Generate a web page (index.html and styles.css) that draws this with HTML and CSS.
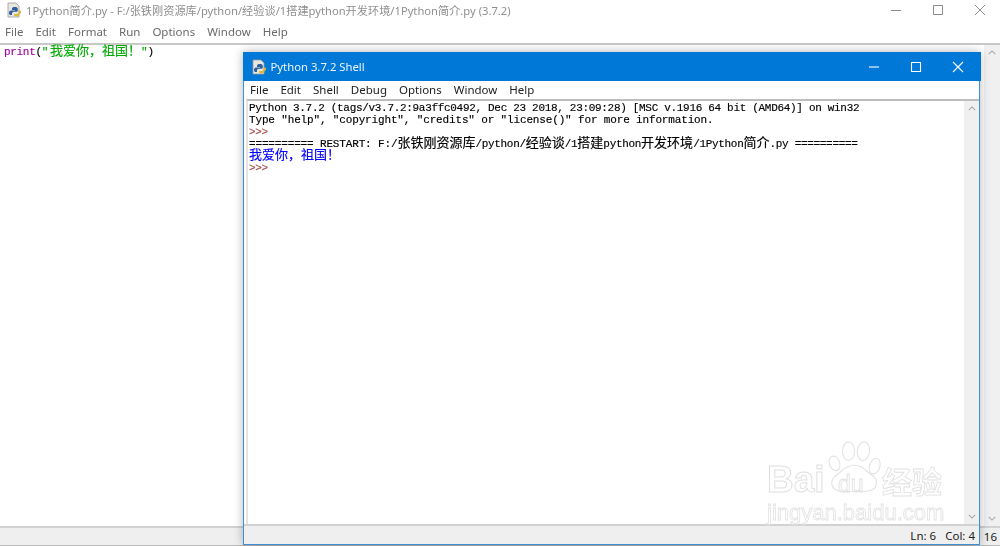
FILE: index.html
```html
<!DOCTYPE html>
<html lang="zh">
<head>
<meta charset="utf-8">
<title>Python IDLE</title>
<link rel="stylesheet" href="styles.css">
</head>
<body>
<svg class="defs" width="0" height="0" aria-hidden="true">
  <symbol id="pyfile" viewBox="0 0 16 16">
    <path d="M2 1h8l3 3v11H2z" fill="#e8e6df" stroke="#9a9a9a" stroke-width=".8"/>
    <path d="M9 5c-2 0-3 .6-3 2v1h3v.6H5c-1.400 0-2 1-2 2.400s.7 2 1.800 2H6v-1.500c0-1 .8-1.700 1.800-1.700h2.400c.9 0 1.600-.7 1.600-1.600V6.800C11.800 5.600 10.600 5 9 5z" fill="#2f5f9e"/>
    <path d="M12.500 8.500v1.400c0 1.300-1 2.100-2.200 2.100H8v.8c0 1 1.200 1.700 2.600 1.700 1.600 0 2.900-.8 2.900-2v-.6c1 0 1.500-1.100 1.500-2.200 0-.9-.6-1.200-1.200-1.200z" fill="#d9b93a"/>
  </symbol>
</svg>

<main class="editor">
  <header class="titlebar">
    <svg class="app-icon"><use href="#pyfile"/></svg>
    <span class="title-text muted">1Python简介.py - F:/张铁刚资源库/python/经验谈/1搭建python开发环境/1Python简介.py (3.7.2)</span>
    <div class="controls muted-controls">
      <svg class="ctl" viewBox="0 0 42 20"><path d="M16 10.500h10" /></svg>
      <svg class="ctl" viewBox="0 0 42 20"><path d="M16.500 5.500h9v9h-9z" /></svg>
      <svg class="ctl" viewBox="0 0 42 20"><path d="M16 5l10 10M26 5L16 15" /></svg>
    </div>
  </header>
  <nav class="menubar editor-menu">
    <span>File</span><span>Edit</span><span>Format</span><span>Run</span><span>Options</span><span>Window</span><span>Help</span>
  </nav>
  <div class="editor-body">
    <div class="code editor-code"><span class="kw">print</span>(<span class="str"><span class="quote">"</span><span class="cjk">我爱你，祖国！</span>"</span>)</div>
    <div class="scrollbar">
      <svg class="chev" viewBox="0 0 10 6"><path d="M1 5l4-4 4 4"/></svg>
      <svg class="chev" viewBox="0 0 10 6"><path d="M1 1l4 4 4-4"/></svg>
    </div>
  </div>
  <footer class="statusbar editor-status"><span class="cut">16</span></footer>
</main>

<section class="shell">
  <header class="shell-title">
    <svg class="app-icon"><use href="#pyfile"/></svg>
    <span class="shell-name">Python 3.7.2 Shell</span>
    <div class="controls white-controls">
      <svg class="ctl-s" viewBox="0 0 42 28"><path d="M16 14h10" /></svg>
      <svg class="ctl-s" viewBox="0 0 42 28"><path d="M16.500 9.500h9v9h-9z" /></svg>
      <svg class="ctl-s" viewBox="0 0 42 28"><path d="M16 9l10 10M26 9L16 19" /></svg>
    </div>
  </header>
  <nav class="menubar shell-menu">
    <span>File</span><span>Edit</span><span>Shell</span><span>Debug</span><span>Options</span><span>Window</span><span>Help</span>
  </nav>
  <div class="shell-body">
    <div class="code shell-code">
      <div class="line">Python 3.7.2 (tags/v3.7.2:9a3ffc0492, Dec 23 2018, 23:09:28) [MSC v.1916 64 bit (AMD64)] on win32</div>
      <div class="line wide">Type "help", "copyright", "credits" or "license()" for more information.</div>
      <div class="line prompt">&gt;&gt;&gt;</div>
      <div class="line"><span class="wide">========== RESTART: F:/</span><span class="cjk">张铁刚资源库</span>/python/<span class="cjk">经验谈</span>/1<span class="cjk">搭建</span>python<span class="cjk">开发环境</span>/1Python<span class="cjk">简介</span>.py ==========</div>
      <div class="line out"><span class="cjk">我爱你，祖国！</span></div>
      <div class="line prompt">&gt;&gt;&gt;</div>
    </div>
    <div class="scrollbar shell-scroll">
      <svg class="chev" viewBox="0 0 10 6"><path d="M1 5l4-4 4 4"/></svg>
      <svg class="chev" viewBox="0 0 10 6"><path d="M1 1l4 4 4-4"/></svg>
    </div>
  </div>
  <footer class="statusbar shell-status"><span>Ln: 6</span><span>Col: 4</span></footer>
</section>

<aside class="watermark">
  <svg class="paw" viewBox="0 0 60 62">
    <ellipse cx="7" cy="26" rx="5.500" ry="8" transform="rotate(-20 7 26)"/>
    <ellipse cx="22" cy="13" rx="6.500" ry="10"/>
    <ellipse cx="38" cy="13" rx="6.500" ry="10" transform="rotate(6 38 13)"/>
    <ellipse cx="50" cy="29" rx="5.500" ry="8.500" transform="rotate(18 50 29)"/>
    <path d="M8 54c-6-4-5-12 2-16 5-3 8-10 18-10s13 7 18 10c7 4 8 12 2 16-5 3-12 2-19 2s-16 2-21-2z"/>
  </svg>
  <span class="wm-bai">Bai</span>
  <span class="wm-du">du</span>
  <span class="wm-cn">经验</span>
  <span class="wm-url">jingyan.baidu.com</span>
</aside>
</body>
</html>
```
FILE: styles.css
```css
* { box-sizing: border-box; }
html, body { height: 100%; }
body {
  margin: 0;
  width: 1000px;
  height: 546px;
  overflow: hidden;
  position: relative;
  background: #fff;
  font-family: "Noto Sans", "Open Sans", "Noto Sans CJK SC", sans-serif;
  color: #222;
  filter: blur(0.35px);
}
.defs { position: absolute; }

.editor { height: 546px; display: flex; flex-direction: column; border-bottom: 1.500px solid #b8b8b8; }
.titlebar { height: 20px; display: flex; align-items: center; padding-left: 6px; flex: none; }
.app-icon { width: 16px; height: 16px; flex: none; }
.title-text { font-size: 11.200px; margin-left: 4px; white-space: nowrap; flex: 1; }
.muted { color: #8f8f8f; }
.controls { display: flex; }
.ctl { width: 42px; height: 20px; fill: none; stroke: #8c8c8c; stroke-width: 1; }
.muted-controls { margin-right: -1px; }

.menubar { display: flex; font-size: 11.500px; align-items: center; background: #fff; }
.editor-menu { height: 23px; gap: 12px; padding-left: 5px; color: #6a6a6a; flex: none; }

.editor-body { flex: 1; display: flex; border-top: 2px solid #c8c8c8; min-height: 0; }
.code {
  font-family: "Liberation Mono", "Noto Sans CJK SC", monospace;
  font-size: 11px;
  letter-spacing: -.31px;
  line-height: 12px;
  -webkit-text-stroke: .15px currentColor;
}
.line { height: 12px; white-space: pre; }
.wide { letter-spacing: -.15px; }
.cjk { font-family: "Noto Sans CJK SC", sans-serif; font-size: 13px; line-height: 0; letter-spacing: 0; }
.editor-code { flex: 1; padding: 1px 0 0 4px; color: #000; white-space: pre; }
.kw { color: #a000a0; }
.str { color: #00aa00; }
.quote { padding-right: 2px; }

.scrollbar {
  width: 16px;
  background: #f0f0f0;
  display: flex;
  flex-direction: column;
  justify-content: space-between;
  align-items: center;
  padding: 5px 0;
}
.chev { width: 8px; height: 5px; fill: none; stroke: #a6a6a6; stroke-width: 1.300; }

.statusbar { background: #efefef; border-top: 2px solid #d2d2d2; font-size: 11.500px; display: flex; align-items: center; }
.editor-status { height: 19px; justify-content: flex-end; padding-right: 3px; color: #222; flex: none; }
.cut { line-height: 18px; }

.shell {
  position: absolute;
  left: 243px;
  top: 52px;
  width: 737px;
  height: 493px;
  display: flex;
  flex-direction: column;
  border: 1.500px solid #3f8fd6;
  border-top: 0;
  background: #fff;
  box-shadow: 0 0 9px rgba(0, 0, 0, .3);
}
.shell-title {
  height: 29px;
  background: #0078d7;
  margin: 0 -1.500px;
  display: flex;
  align-items: center;
  padding-left: 8px;
  flex: none;
}
.shell-name { color: #fff; font-size: 11.300px; margin-left: 4px; flex: 1; opacity: .92; }
.ctl-s { width: 42px; height: 28px; fill: none; stroke: #fff; stroke-width: 1.100; }
.white-controls { padding-right: 2px; }
.shell-menu { height: 18px; gap: 12px; padding: 0 0 2px 6px; color: #222; flex: none; }
.shell-body { flex: 1; display: flex; border-top: 2px solid #bdbdbd; border-left: 2px solid #e4e4e4; margin-left: 2px; min-height: 0; }
.shell-code { flex: 1; padding: 1px 0 0 1px; color: #000; }
.shell-scroll { width: 15px; }
.prompt { color: #a85050; }
.out { color: #0000ff; }
.shell-status { height: 20px; justify-content: flex-end; gap: 9px; padding-right: 4px; flex: none; }

.watermark {
  position: absolute;
  left: 764px;
  top: 436px;
  width: 200px;
  height: 100px;
  color: transparent;
  pointer-events: none;
  font-family: "Liberation Sans", sans-serif;
}
.watermark span { position: absolute; white-space: nowrap; }
.paw { position: absolute; left: 64px; top: 2px; width: 56px; height: 60px; fill: #fff; stroke: #e3e3e3; stroke-width: 1.200; }
.wm-bai { left: 3px; top: 22px; font-size: 37px; font-weight: 700; line-height: 44px; -webkit-text-stroke: 1px #e0e0e0; }
.wm-du { left: 74px; top: 34px; font-size: 23px; line-height: 28px; -webkit-text-stroke: .8px #e0e0e0; }
.wm-cn { left: 118px; top: 24px; font-family: "Noto Sans CJK SC", sans-serif; font-size: 30px; line-height: 40px; font-weight: 700; -webkit-text-stroke: .8px #e0e0e0; }
.wm-url { left: 3px; top: 63px; font-size: 22px; line-height: 28px; -webkit-text-stroke: .8px #e2e2e2; }
```
